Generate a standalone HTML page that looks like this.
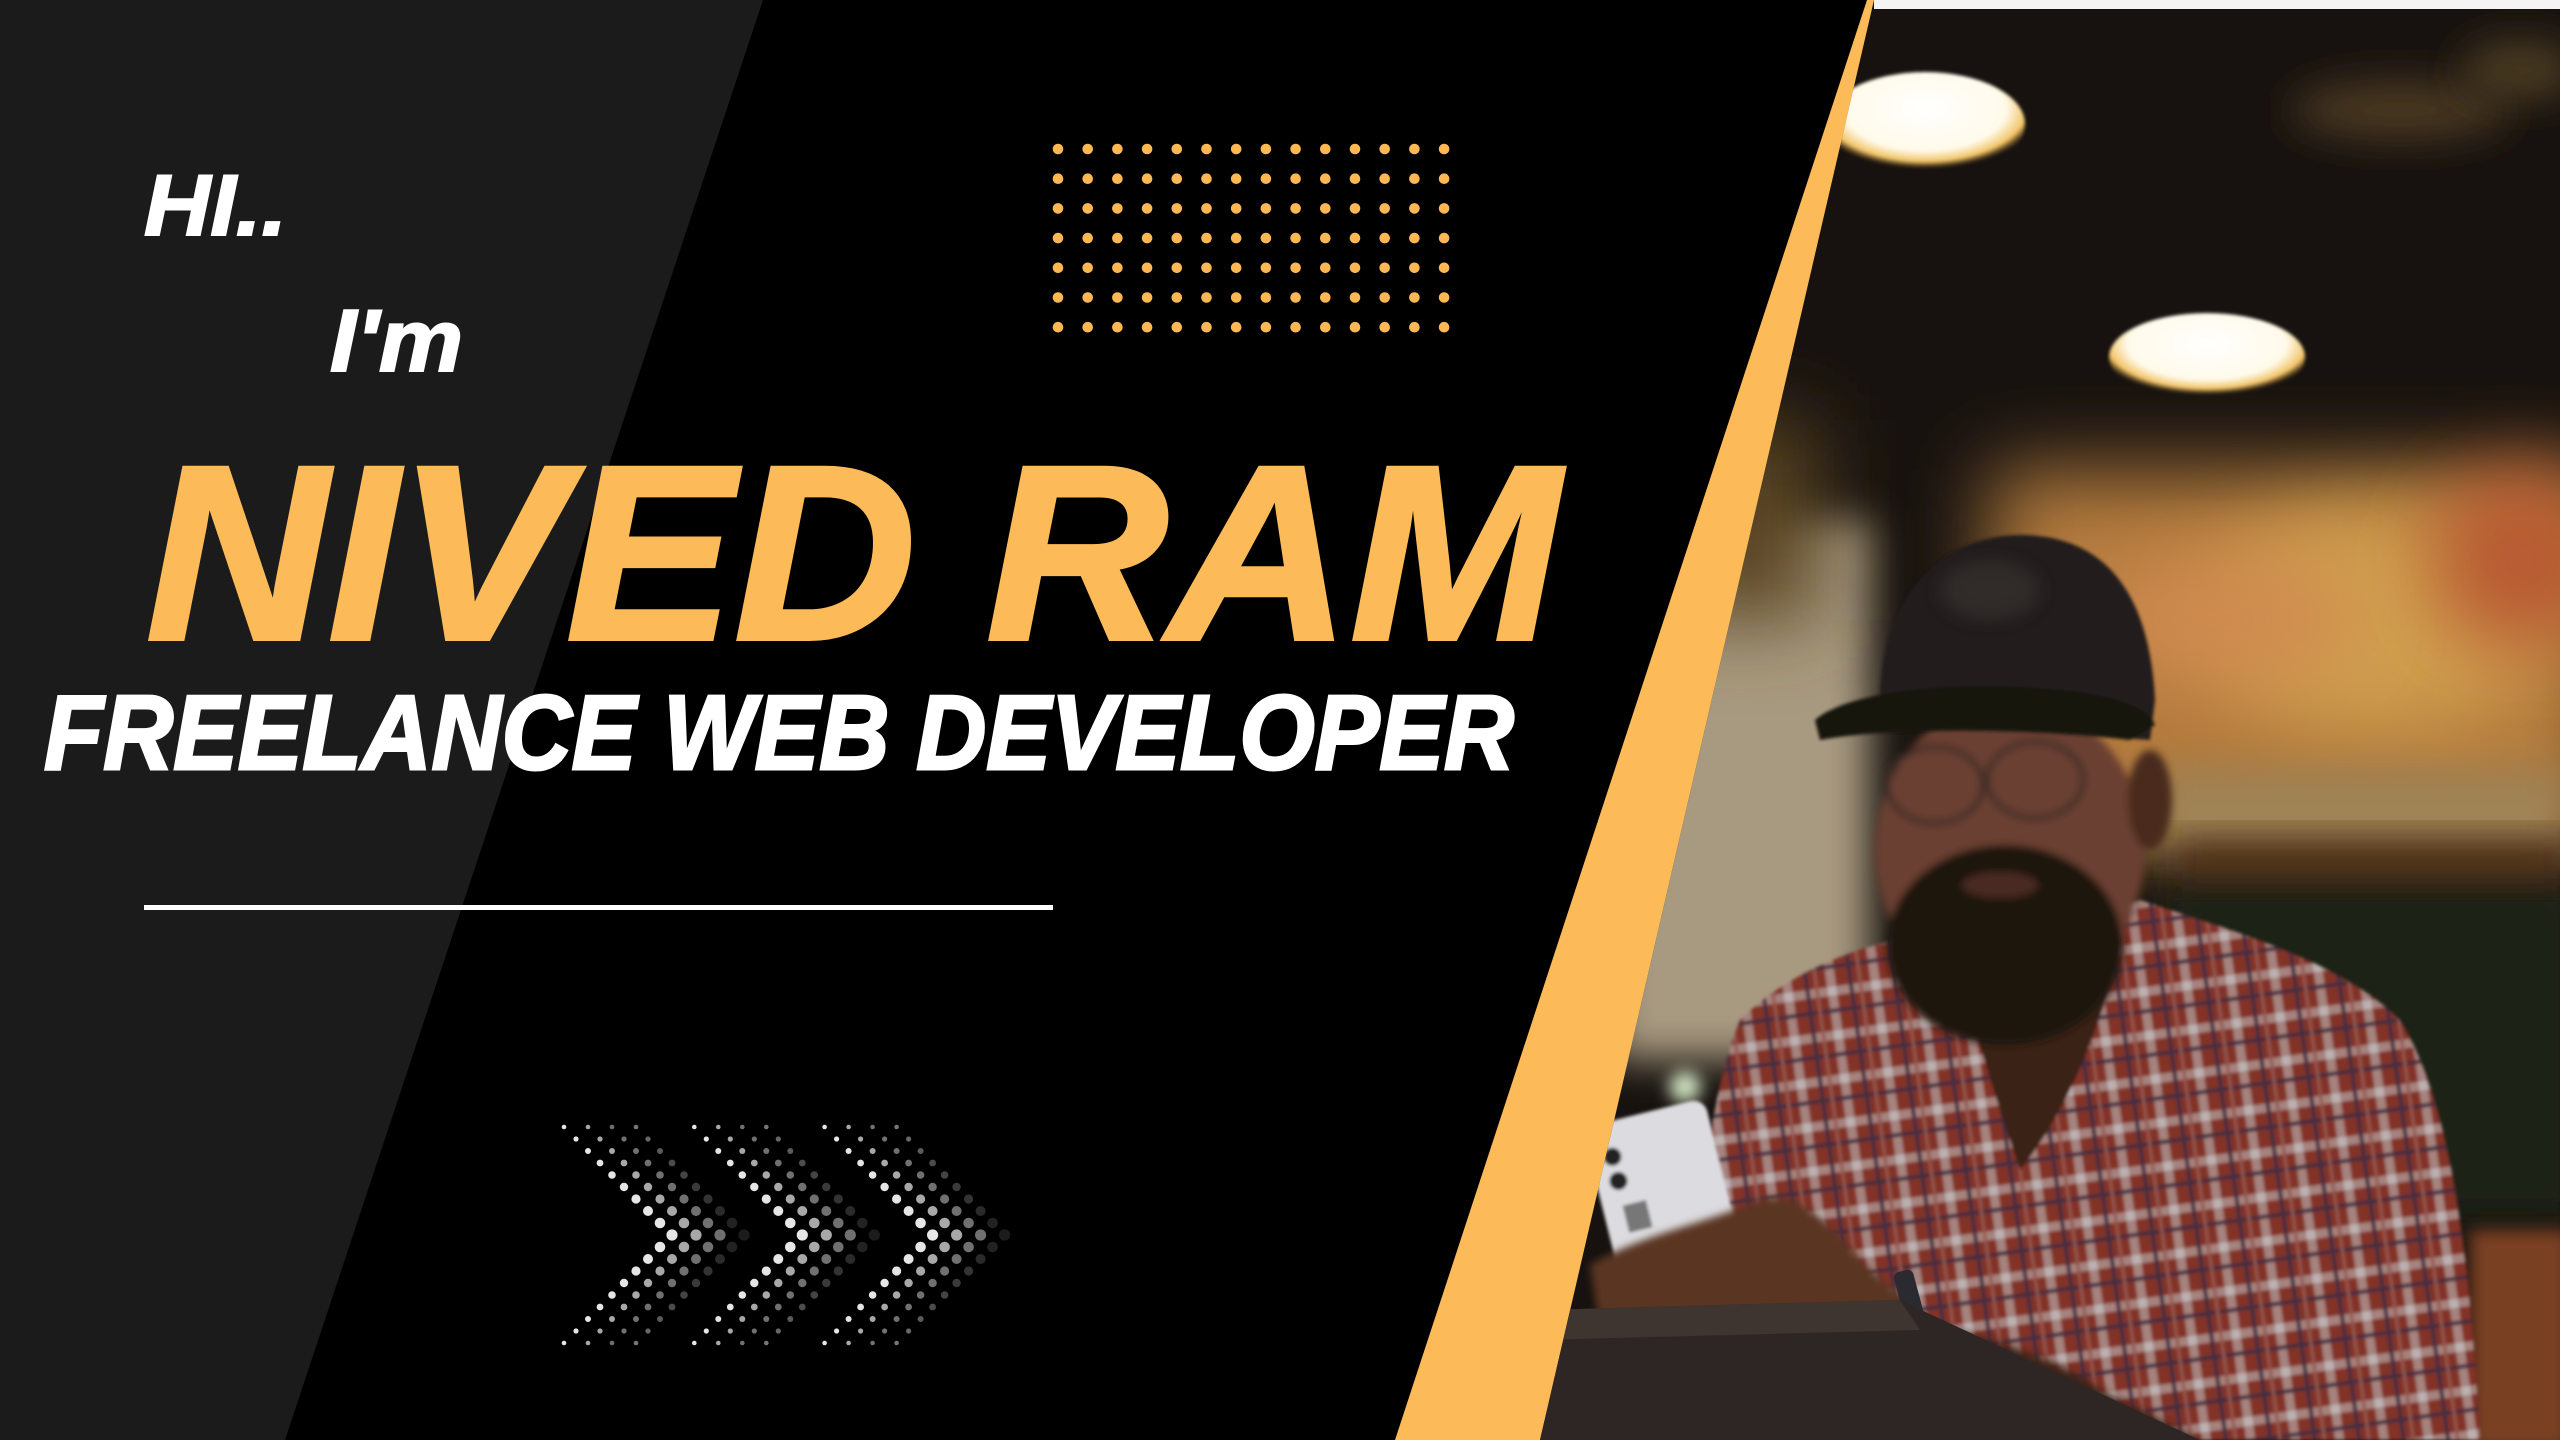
<!DOCTYPE html>
<html><head><meta charset="utf-8"><style>
html,body{margin:0;padding:0;background:#000;width:2560px;height:1440px;overflow:hidden}
svg{display:block}
</style></head><body>
<svg width="2560" height="1440" viewBox="0 0 2560 1440" xmlns="http://www.w3.org/2000/svg">
<defs>
<filter id="b40" x="-50%" y="-50%" width="200%" height="200%"><feGaussianBlur stdDeviation="40"/></filter>
<filter id="b20" x="-50%" y="-50%" width="200%" height="200%"><feGaussianBlur stdDeviation="20"/></filter>
<filter id="b8" x="-50%" y="-50%" width="200%" height="200%"><feGaussianBlur stdDeviation="8"/></filter>
<filter id="b4" x="-20%" y="-20%" width="140%" height="140%"><feGaussianBlur stdDeviation="4"/></filter>
<filter id="b2" x="-20%" y="-20%" width="140%" height="140%"><feGaussianBlur stdDeviation="1.5"/></filter>
<clipPath id="photo"><polygon points="1874,0 2560,0 2560,1440 1540,1440"/></clipPath>
<pattern id="plaid" width="44" height="44" patternUnits="userSpaceOnUse" patternTransform="rotate(-8)">
<rect width="44" height="44" fill="#9a3a30"/>
<rect x="0" y="0" width="44" height="9" fill="#c49a94"/>
<rect x="0" y="0" width="9" height="44" fill="#c49a94"/>
<rect x="0" y="0" width="9" height="9" fill="#ddd0d0"/>
<rect x="22" y="0" width="4" height="44" fill="#50384a"/>
<rect x="0" y="22" width="44" height="4" fill="#50384a"/>
<rect x="32" y="0" width="3" height="44" fill="#b0685e"/>
</pattern>
<radialGradient id="lamp" cx="50%" cy="35%" r="58%"><stop offset="0" stop-color="#fff"/><stop offset="0.7" stop-color="#fffaea"/><stop offset="0.88" stop-color="#f2c466"/><stop offset="1" stop-color="#8a6020" stop-opacity="0"/></radialGradient>
</defs>

<polygon points="0,0 763,0 285,1440 0,1440" fill="#1b1b1b"/>

<g fill="#fdb753">
<g id="drow">
<circle cx="1058" cy="149" r="5.3"/><circle cx="1087.7" cy="149" r="5.3"/><circle cx="1117.4" cy="149" r="5.3"/><circle cx="1147.1" cy="149" r="5.3"/><circle cx="1176.8" cy="149" r="5.3"/><circle cx="1206.5" cy="149" r="5.3"/><circle cx="1236.2" cy="149" r="5.3"/><circle cx="1265.9" cy="149" r="5.3"/><circle cx="1295.6" cy="149" r="5.3"/><circle cx="1325.3" cy="149" r="5.3"/><circle cx="1355" cy="149" r="5.3"/><circle cx="1384.7" cy="149" r="5.3"/><circle cx="1414.4" cy="149" r="5.3"/><circle cx="1444.1" cy="149" r="5.3"/>
</g>
<use href="#drow" y="29.7"/><use href="#drow" y="59.4"/><use href="#drow" y="89.1"/><use href="#drow" y="118.8"/><use href="#drow" y="148.5"/><use href="#drow" y="178.2"/>
</g>

<g font-family="'Liberation Sans', sans-serif" font-weight="bold" font-style="italic">
<text x="144" y="235" font-size="86" fill="#fff" stroke="#fff" stroke-width="2" textLength="143" lengthAdjust="spacingAndGlyphs">HI..</text>
<text x="330" y="371" font-size="88" fill="#fff" stroke="#fff" stroke-width="2" textLength="133" lengthAdjust="spacingAndGlyphs">I'm</text>
<text x="146" y="639" font-size="249" fill="#fcbb58" stroke="#fcbb58" stroke-width="4" textLength="1414" lengthAdjust="spacingAndGlyphs">NIVED RAM</text>
<text x="44" y="769" font-size="106" fill="#fff" stroke="#fff" stroke-width="3" textLength="1470" lengthAdjust="spacingAndGlyphs">FREELANCE WEB DEVELOPER</text>
</g>

<rect x="144" y="905" width="909" height="5" fill="#fff"/>

<g id="chev">
<g fill="#e6e6e6"><circle cx="564" cy="1127" r="2.3"/><circle cx="576" cy="1139" r="2.6"/><circle cx="588" cy="1151" r="3"/><circle cx="600" cy="1163" r="3.4"/><circle cx="612" cy="1175" r="3.8"/><circle cx="624" cy="1187" r="4.2"/><circle cx="636" cy="1199" r="4.6"/><circle cx="648" cy="1211" r="5"/><circle cx="660" cy="1223" r="5.3"/><circle cx="672" cy="1235" r="5.6"/><circle cx="660" cy="1247" r="5.3"/><circle cx="648" cy="1259" r="5"/><circle cx="636" cy="1271" r="4.6"/><circle cx="624" cy="1283" r="4.2"/><circle cx="612" cy="1295" r="3.8"/><circle cx="600" cy="1307" r="3.4"/><circle cx="588" cy="1319" r="3"/><circle cx="576" cy="1331" r="2.6"/><circle cx="564" cy="1343" r="2.3"/></g>
<g fill="#a8a8a8" transform="translate(24,0)"><circle cx="564" cy="1127" r="2.3"/><circle cx="576" cy="1139" r="2.6"/><circle cx="588" cy="1151" r="3"/><circle cx="600" cy="1163" r="3.4"/><circle cx="612" cy="1175" r="3.8"/><circle cx="624" cy="1187" r="4.2"/><circle cx="636" cy="1199" r="4.6"/><circle cx="648" cy="1211" r="5"/><circle cx="660" cy="1223" r="5.3"/><circle cx="672" cy="1235" r="5.6"/><circle cx="660" cy="1247" r="5.3"/><circle cx="648" cy="1259" r="5"/><circle cx="636" cy="1271" r="4.6"/><circle cx="624" cy="1283" r="4.2"/><circle cx="612" cy="1295" r="3.8"/><circle cx="600" cy="1307" r="3.4"/><circle cx="588" cy="1319" r="3"/><circle cx="576" cy="1331" r="2.6"/><circle cx="564" cy="1343" r="2.3"/></g>
<g fill="#707070" transform="translate(48,0)"><circle cx="564" cy="1127" r="2.3"/><circle cx="576" cy="1139" r="2.6"/><circle cx="588" cy="1151" r="3"/><circle cx="600" cy="1163" r="3.4"/><circle cx="612" cy="1175" r="3.8"/><circle cx="624" cy="1187" r="4.2"/><circle cx="636" cy="1199" r="4.6"/><circle cx="648" cy="1211" r="5"/><circle cx="660" cy="1223" r="5.3"/><circle cx="672" cy="1235" r="5.6"/><circle cx="660" cy="1247" r="5.3"/><circle cx="648" cy="1259" r="5"/><circle cx="636" cy="1271" r="4.6"/><circle cx="624" cy="1283" r="4.2"/><circle cx="612" cy="1295" r="3.8"/><circle cx="600" cy="1307" r="3.4"/><circle cx="588" cy="1319" r="3"/><circle cx="576" cy="1331" r="2.6"/><circle cx="564" cy="1343" r="2.3"/></g>
<g fill="#3a3a3a" transform="translate(72,0)"><circle cx="564" cy="1127" r="2.3" fill="#777"/><circle cx="576" cy="1139" r="2.6" fill="#666"/><circle cx="588" cy="1151" r="3" fill="#5a5a5a"/><circle cx="600" cy="1163" r="3.4" fill="#4c4c4c"/><circle cx="612" cy="1175" r="3.8" fill="#444"/><circle cx="624" cy="1187" r="4.2"/><circle cx="636" cy="1199" r="4.6" fill="#333"/><circle cx="648" cy="1211" r="5" fill="#2a2a2a"/><circle cx="660" cy="1223" r="5.3" fill="#222"/><circle cx="672" cy="1235" r="5.6" fill="#1c1c1c"/><circle cx="660" cy="1247" r="5.3" fill="#222"/><circle cx="648" cy="1259" r="5" fill="#2a2a2a"/><circle cx="636" cy="1271" r="4.6" fill="#333"/><circle cx="624" cy="1283" r="4.2"/><circle cx="612" cy="1295" r="3.8" fill="#444"/><circle cx="600" cy="1307" r="3.4" fill="#4c4c4c"/><circle cx="588" cy="1319" r="3" fill="#5a5a5a"/><circle cx="576" cy="1331" r="2.6" fill="#666"/><circle cx="564" cy="1343" r="2.3" fill="#777"/></g>
</g>
<use href="#chev" x="130.3"/>
<use href="#chev" x="260.6"/>

<polygon points="1867,0 1878,0 1542,1440 1395,1440" fill="#fcbb58"/>

<g clip-path="url(#photo)">
<rect x="1500" y="0" width="1060" height="1440" fill="#17120f"/>
<rect x="1610" y="520" width="260" height="540" fill="#a89a80" filter="url(#b20)"/>
<rect x="1660" y="420" width="160" height="200" fill="#5a4420" filter="url(#b40)"/>
<rect x="1990" y="470" width="620" height="370" fill="#b27a3c" filter="url(#b40)"/>
<ellipse cx="2380" cy="620" rx="180" ry="110" fill="#d0a050" filter="url(#b40)"/>
<ellipse cx="2520" cy="560" rx="90" ry="90" fill="#b85a32" filter="url(#b40)"/>
<ellipse cx="2220" cy="620" rx="140" ry="60" fill="#d08a50" filter="url(#b40)"/>
<rect x="2150" y="770" width="420" height="90" fill="#a08456" filter="url(#b20)"/>
<rect x="2160" y="880" width="420" height="340" fill="#1c2014" filter="url(#b20)"/>
<rect x="2170" y="840" width="400" height="40" fill="#4a2a18" filter="url(#b20)"/>
<ellipse cx="2400" cy="110" rx="110" ry="30" fill="#4a3820" filter="url(#b20)"/>
<ellipse cx="2520" cy="70" rx="60" ry="30" fill="#4a3a24" filter="url(#b20)"/>
<ellipse cx="1925" cy="124" rx="100" ry="52" fill="url(#lamp)" filter="url(#b2)"/>
<ellipse cx="2207" cy="357" rx="98" ry="44" fill="url(#lamp)" filter="url(#b2)"/>
<circle cx="1685" cy="1087" r="16" fill="#cfe0c0" filter="url(#b8)"/>
<rect x="2470" y="1230" width="100" height="220" fill="#7a4020" filter="url(#b8)"/>
<g filter="url(#b2)">
<path d="M1740,1020 C1800,960 1900,930 1960,935 L2140,900 C2230,930 2340,960 2400,1020 C2450,1100 2470,1250 2480,1440 L1680,1440 C1690,1300 1700,1120 1740,1020Z" fill="url(#plaid)"/>
<path d="M1740,1020 C1800,960 1900,930 1960,935 L2140,900 C2230,930 2340,960 2400,1020 C2450,1100 2470,1250 2480,1440 L1680,1440 C1690,1300 1700,1120 1740,1020Z" fill="#000" opacity="0.15"/>
<path d="M1960,960 L2120,940 C2100,1040 2060,1120 2020,1170 C1990,1080 1970,1020 1960,960Z" fill="#3a2218"/>
</g>
<g filter="url(#b4)">
<ellipse cx="2010" cy="850" rx="135" ry="150" fill="#6a4030"/>
<ellipse cx="2005" cy="945" rx="118" ry="100" fill="#1e140f"/>
<ellipse cx="2000" cy="885" rx="38" ry="13" fill="#4a2a20"/>
<ellipse cx="1935" cy="785" rx="48" ry="38" fill="none" stroke="#3a2a28" stroke-width="5"/>
<ellipse cx="2035" cy="780" rx="48" ry="38" fill="none" stroke="#3a2a28" stroke-width="5"/>
<ellipse cx="2150" cy="800" rx="22" ry="50" fill="#4a2c1e"/>
</g>
<g filter="url(#b2)">
<path d="M1880,700 C1880,600 1940,535 2020,535 C2110,535 2150,600 2155,700 L2150,740 L1880,720Z" fill="#221e1c"/>
<path d="M1815,720 C1850,690 1960,680 2060,690 C2120,695 2150,710 2155,725 L2130,740 C2050,730 1900,725 1820,740Z" fill="#151211"/>
</g>
<ellipse cx="1990" cy="590" rx="50" ry="30" fill="#3a3432" opacity="0.6" filter="url(#b8)"/>
<g transform="rotate(-14 1665 1190)" filter="url(#b2)"><rect x="1600" y="1110" width="125" height="165" rx="14" fill="#dcdce0"/><circle cx="1622" cy="1145" r="9" fill="#222"/><circle cx="1622" cy="1170" r="9" fill="#222"/><rect x="1620" y="1195" width="24" height="28" fill="#777"/></g>
<g filter="url(#b4)">
<path d="M1590,1265 C1640,1235 1700,1225 1760,1200 C1800,1190 1830,1225 1870,1270 L1920,1310 L1600,1330Z" fill="#5a3422"/>
<path d="M1880,1310 C1950,1330 2050,1350 2100,1390 L2200,1440 L1900,1440Z" fill="#3a2218"/>
</g>
<rect x="1900" y="1270" width="20" height="60" rx="6" fill="#2a2a30" transform="rotate(-15 1910 1300)"/>
<path d="M1540,1310 L1900,1300 L2200,1440 L1540,1440Z" fill="#2e2624"/>
<path d="M1540,1310 L1900,1300 L1920,1330 L1540,1340Z" fill="#3e3430"/>
<rect x="1874" y="0" width="686" height="9" fill="#f4f4f4"/>
</g>
</svg>
</body></html>
